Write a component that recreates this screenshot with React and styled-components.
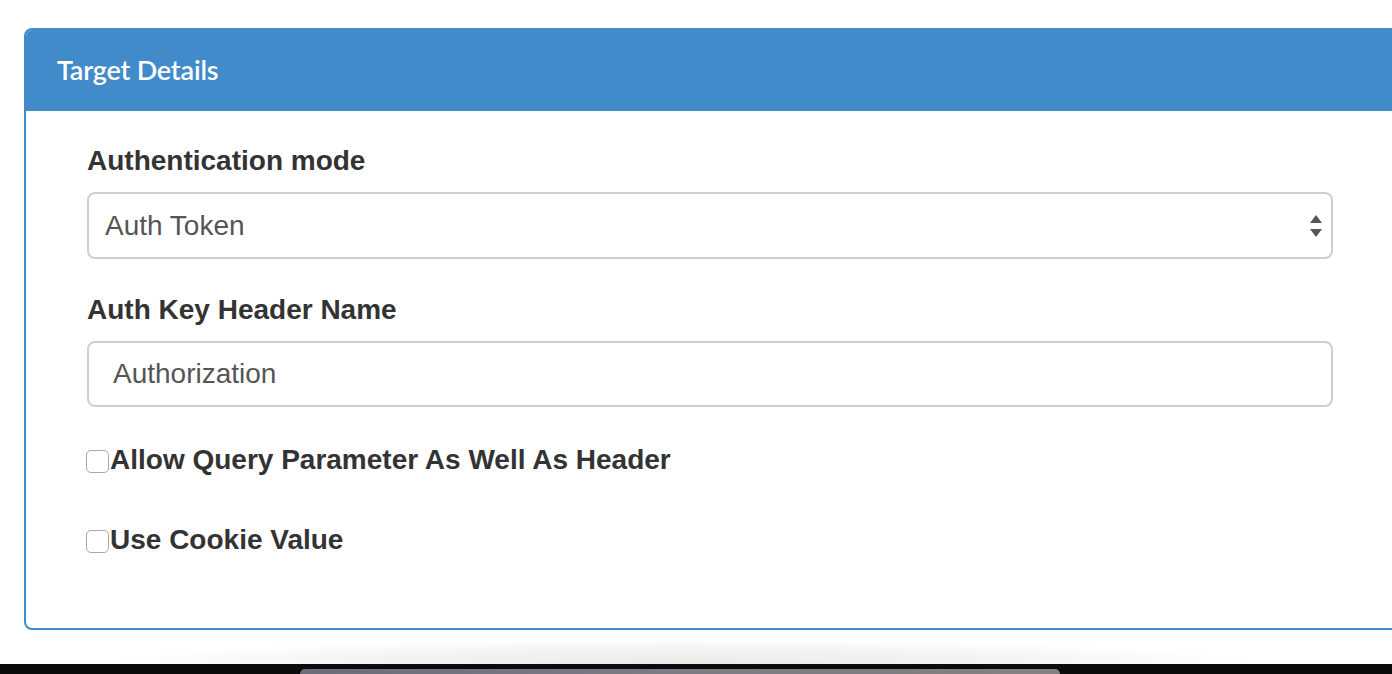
import React from "react";
import styled, {createGlobalStyle} from "styled-components";

const GlobalStyle = createGlobalStyle`
  html, body {
    margin: 0;
    padding: 0;
    background: #fff;
    overflow: hidden;
  }
  body {
    font-family: "Liberation Sans", Arial, sans-serif;
    color: #333;
  }
`;

const Page = styled.div`
  width: 1392px;
  height: 674px;
  display: flex;
  flex-direction: column;
  overflow: hidden;
`;

const Content = styled.div`
  padding: 28px 0 0 24px;
`;

const Panel = styled.section`
  width: 1420px;
  border: 2px solid #418bca;
  border-radius: 8px;
  background: #fff;
  overflow: hidden;
`;

const PanelHeading = styled.header`
  height: 81px;
  background: #418bca;
  display: flex;
  align-items: center;
  padding: 0 0 0 31px;
`;

const PanelTitle = styled.h3`
  margin: 0;
  padding-bottom: 2px;
  font-family: Lato, "Open Sans", sans-serif;
  font-weight: 600;
  font-size: 27px;
  letter-spacing: -0.2px;
  color: #fff;
`;

const PanelBody = styled.div`
  padding: 31px 0 70px 61px;
  width: 1246px;
`;

const FormGroup = styled.div`
  margin-bottom: ${(p) => p.gap || 32}px;
`;

const Label = styled.label`
  display: block;
  font-weight: bold;
  font-size: 28px;
  line-height: 38px;
  margin-bottom: 12px;
  color: #333;
`;

const Field = styled.div`
  position: relative;
  box-sizing: border-box;
  height: ${(p) => p.h}px;
  border: 2px solid #cfcfcf;
  border-radius: 8px;
  display: flex;
  align-items: center;
  padding-left: ${(p) => p.pad}px;
  font-size: 28px;
  color: #555;
  background: #fff;
`;

const Arrows = styled.svg`
  position: absolute;
  right: 8px;
  top: 50%;
  transform: translateY(-50%);
`;

const CheckRow = styled.label`
  display: flex;
  align-items: center;
  font-weight: bold;
  font-size: 28px;
  line-height: 37px;
  color: #333;
  margin-bottom: ${(p) => p.gap || 0}px;
`;

const Box = styled.span`
  box-sizing: border-box;
  width: 23px;
  height: 23px;
  margin: 4px 1px 0 -1px;
  border: 1.5px solid #a9a9a9;
  border-radius: 5px;
  background: #fff;
  flex: none;
`;

const Below = styled.div`
  flex: 1;
  background: radial-gradient(ellipse 55% 100% at 49% 100%, #eaeaea 0%, #f4f4f4 45%, #fff 75%);
`;

const Dock = styled.div`
  height: 10px;
  background: #0b0b0b;
  display: flex;
  justify-content: center;
  align-items: flex-end;
  padding-right: 32px;
`;

const DockBar = styled.div`
  width: 760px;
  height: 5px;
  border-radius: 6px 6px 0 0;
  background: linear-gradient(90deg, #6a6e7a, #7c7c86 50%, #85807f);
`;

export default function App() {
  return (
    <Page>
      <GlobalStyle />
      <Content>
        <Panel>
          <PanelHeading>
            <PanelTitle>Target Details</PanelTitle>
          </PanelHeading>
          <PanelBody>
            <FormGroup>
              <Label>Authentication mode</Label>
              <Field h={67} pad={16}>
                Auth Token
                <Arrows width="14" height="24" viewBox="0 0 14 24">
                  <path d="M7 1 L13 9 L1 9 Z" fill="#555" />
                  <path d="M1 15 L13 15 L7 23 Z" fill="#555" />
                </Arrows>
              </Field>
            </FormGroup>
            <FormGroup gap={34}>
              <Label>Auth Key Header Name</Label>
              <Field h={66} pad={24}>
                Authorization
              </Field>
            </FormGroup>
            <CheckRow gap={43}>
              <Box />
              Allow Query Parameter As Well As Header
            </CheckRow>
            <CheckRow>
              <Box />
              Use Cookie Value
            </CheckRow>
          </PanelBody>
        </Panel>
      </Content>
      <Below />
      <Dock>
        <DockBar />
      </Dock>
    </Page>
  );
}
